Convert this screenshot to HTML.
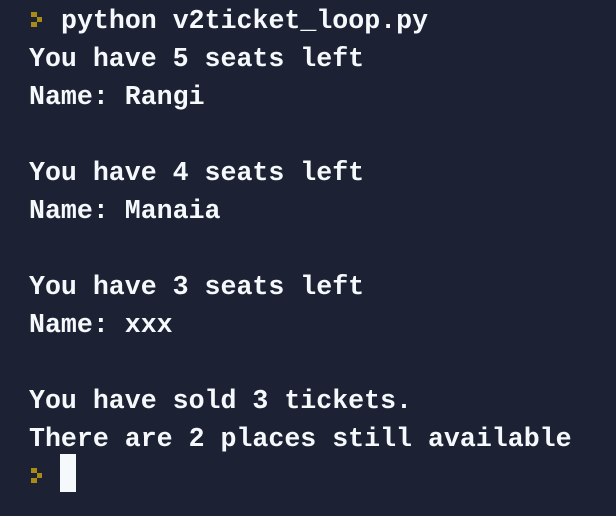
<!DOCTYPE html>
<html><head><style>
html,body{margin:0;padding:0;background:#1c2233;width:616px;height:516px;overflow:hidden}
.t{position:absolute;left:29px;top:2px;font-family:"Liberation Mono",monospace;font-weight:bold;font-size:26.6px;line-height:38px;color:#f5f9fc;white-space:pre}
.p{position:absolute;width:12px;height:16px}
.cur{position:absolute;left:60px;top:454px;width:16px;height:38px;background:#f5f9fc}
</style></head><body>
<svg class="p" style="left:31px;top:12px" viewBox="0 0 12 16"><path d="M0 0h6v5h-6z M6 5h5v5h-5z M0 10h6v5h-6z" fill="#a88a14"/></svg>
<div class="t"><span style="padding-left:32px">python v2ticket_loop.py</span>
You have 5 seats left
Name: Rangi

You have 4 seats left
Name: Manaia

You have 3 seats left
Name: xxx

You have sold 3 tickets.
There are 2 places still available</div>
<svg class="p" style="left:31px;top:468px" viewBox="0 0 12 16"><path d="M0 0h6v5h-6z M6 5h5v5h-5z M0 10h6v5h-6z" fill="#a88a14"/></svg>
<div class="cur"></div>
</body></html>
